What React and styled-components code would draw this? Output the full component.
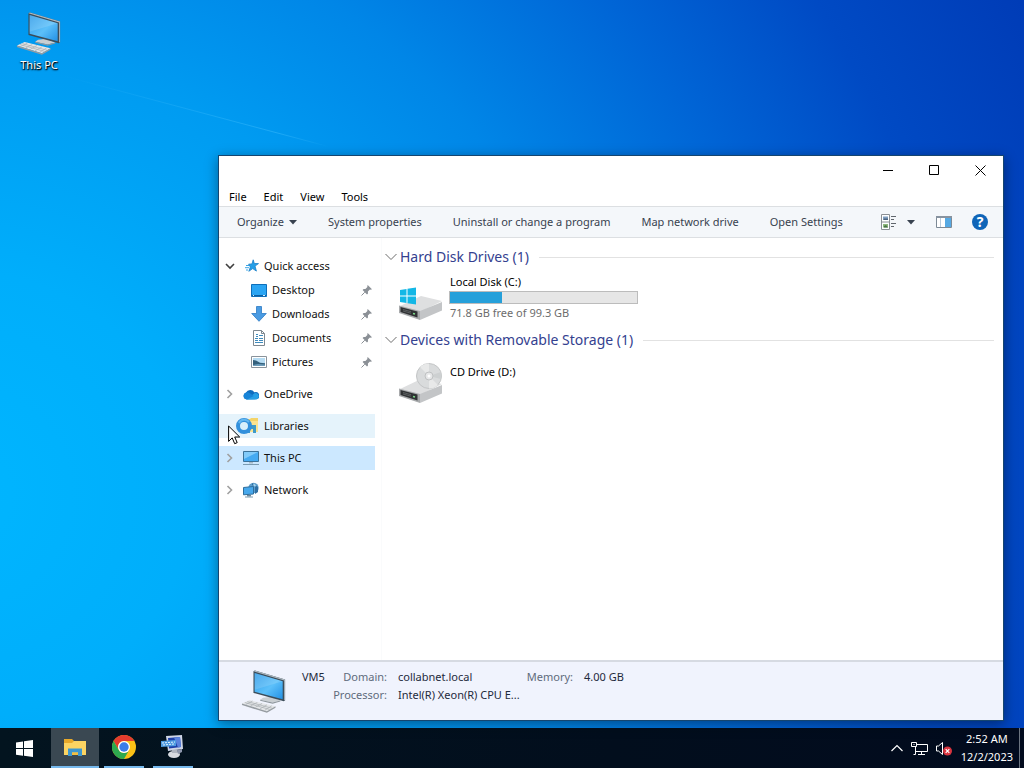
import { useState, useEffect } from "react";
import styled, { createGlobalStyle } from "styled-components";

const MENUS = ["File", "Edit", "View", "Tools"];

const COMMANDS = [
  "System properties",
  "Uninstall or change a program",
  "Map network drive",
  "Open Settings",
];

const PINNED = [
  { name: "Desktop", icon: <DesktopIcon /> },
  { name: "Downloads", icon: <DownloadsIcon /> },
  { name: "Documents", icon: <DocumentsIcon /> },
  { name: "Pictures", icon: <PicturesIcon /> },
];

const DRIVE = { name: "Local Disk (C:)", free: 71.8, total: 99.3 };

function App() {
  const [selected, setSelected] = useState("This PC");

  useEffect(() => {
    document.title = "This PC";
  }, []);

  return (
    <Screen>
      <GlobalStyle />
      <Desktop>
        <Streak viewBox="0 0 340 160" aria-hidden="true">
          <path d="M60 75 L330 147" stroke="url(#streak)" strokeWidth="1" />
          <defs>
            <linearGradient id="streak">
              <stop offset="0" stopColor="#4cc4ff" stopOpacity="0" />
              <stop offset="0.8" stopColor="#4cc4ff" stopOpacity="0.4" />
              <stop offset="1" stopColor="#4cc4ff" stopOpacity="0" />
            </linearGradient>
          </defs>
        </Streak>
        <Shortcut type="button">
          <ComputerIcon id="shortcut" size={46} />
          <span>This PC</span>
        </Shortcut>

        <Window>
          <TitleBar>
            <CaptionButton type="button" aria-label="Minimize">
              <svg width="11" height="11" viewBox="0 0 11 11">
                <path d="M0 5.5h10" stroke="#000" />
              </svg>
            </CaptionButton>
            <CaptionButton type="button" aria-label="Maximize">
              <svg width="11" height="11" viewBox="0 0 11 11">
                <path d="M.5 .5h9v9h-9z" stroke="#000" fill="none" />
              </svg>
            </CaptionButton>
            <CaptionButton type="button" aria-label="Close">
              <svg width="11" height="11" viewBox="0 0 11 11">
                <path d="M.5 .5l10 10M10.5 .5l-10 10" stroke="#000" />
              </svg>
            </CaptionButton>
          </TitleBar>

          <MenuBar>
            {MENUS.map(menu => (
              <MenuButton type="button" key={menu}>
                {menu}
              </MenuButton>
            ))}
          </MenuBar>

          <Toolbar>
            <Commands>
              <Command type="button">
                Organize
                <Caret />
              </Command>
              {COMMANDS.map(command => (
                <Command type="button" key={command}>
                  {command}
                </Command>
              ))}
            </Commands>
            <ToolButton type="button" aria-label="Change your view">
              <ViewIcon />
            </ToolButton>
            <ToolButton type="button" aria-label="More options" $gap={10}>
              <Caret />
            </ToolButton>
            <ToolButton type="button" aria-label="Preview pane" $gap={21}>
              <PaneIcon />
            </ToolButton>
            <ToolButton type="button" aria-label="Help" $gap={20}>
              <Help>?</Help>
            </ToolButton>
          </Toolbar>

          <Body>
            <Sidebar>
              <NavRow
                type="button"
                $active={selected === "Quick access"}
                onClick={() => setSelected("Quick access")}
              >
                <Chevron $open />
                <NavIcon>
                  <StarIcon />
                </NavIcon>
                Quick access
              </NavRow>
              <PinnedList>
                {PINNED.map(({ name, icon }) => (
                  <NavRow
                    type="button"
                    key={name}
                    $child
                    $active={selected === name}
                    onClick={() => setSelected(name)}
                  >
                    <NavIcon>{icon}</NavIcon>
                    <NavLabel>{name}</NavLabel>
                    <PinIcon />
                  </NavRow>
                ))}
              </PinnedList>
              <NavRow
                type="button"
                $active={selected === "OneDrive"}
                onClick={() => setSelected("OneDrive")}
              >
                <Chevron />
                <NavIcon>
                  <OneDriveIcon />
                </NavIcon>
                OneDrive
              </NavRow>
              <NavRow
                type="button"
                $hover
                $active={selected === "Libraries"}
                onClick={() => setSelected("Libraries")}
              >
                <ChevronSpace />
                <NavIcon>
                  <LibrariesIcon />
                </NavIcon>
                Libraries
              </NavRow>
              <NavRow
                type="button"
                $active={selected === "This PC"}
                onClick={() => setSelected("This PC")}
              >
                <Chevron />
                <NavIcon>
                  <MonitorIcon />
                </NavIcon>
                This PC
              </NavRow>
              <NavRow
                type="button"
                $active={selected === "Network"}
                onClick={() => setSelected("Network")}
              >
                <Chevron />
                <NavIcon>
                  <NetworkIcon />
                </NavIcon>
                Network
              </NavRow>
            </Sidebar>

            <Content>
              <Group title="Hard Disk Drives (1)">
                <Drive>
                  <DriveIcon />
                  <DriveInfo>
                    <span>{DRIVE.name}</span>
                    <Usage
                      role="progressbar"
                      aria-label="Used space"
                      aria-valuenow={Math.round(
                        (1 - DRIVE.free / DRIVE.total) * 100
                      )}
                    >
                      <UsageFill
                        style={{
                          width: `${(1 - DRIVE.free / DRIVE.total) * 100}%`,
                        }}
                      />
                    </Usage>
                    <Muted>
                      {DRIVE.free} GB free of {DRIVE.total} GB
                    </Muted>
                  </DriveInfo>
                </Drive>
              </Group>
              <Group title="Devices with Removable Storage (1)">
                <Drive $tall>
                  <CdIcon />
                  <DriveInfo>
                    <span>CD Drive (D:)</span>
                  </DriveInfo>
                </Drive>
              </Group>
            </Content>
          </Body>

          <Details>
            <ComputerIcon id="details" size={46} />
            <MachineName>VM5</MachineName>
            <Facts>
              <dt>Domain:</dt>
              <dd>collabnet.local</dd>
              <dt>Processor:</dt>
              <dd>Intel(R) Xeon(R) CPU E...</dd>
            </Facts>
            <Facts $narrow>
              <dt>Memory:</dt>
              <dd>4.00 GB</dd>
            </Facts>
          </Details>
        </Window>
      </Desktop>

      <Taskbar>
        <StartButton type="button" aria-label="Start">
          <svg width="17" height="17" viewBox="0 0 17 17" fill="#fff">
            <path d="M0 2.4l7-1v6.7H0zM8 1.3L17 0v8.1H8zM0 9h7v6.7l-7-1zM8 9h9v8l-9-1.3z" />
          </svg>
        </StartButton>
        <TaskButton type="button" aria-label="File Explorer" $active>
          <FolderIcon />
        </TaskButton>
        <TaskButton type="button" aria-label="Google Chrome">
          <ChromeIcon />
        </TaskButton>
        <TaskButton type="button" aria-label="Remote desktop">
          <RemoteIcon />
        </TaskButton>
        <Tray>
          <TrayButton type="button" aria-label="Show hidden icons">
            <svg width="12" height="8" viewBox="0 0 12 8" fill="none">
              <path d="M.5 7L6 1.5 11.5 7" stroke="#fff" strokeWidth="1.2" />
            </svg>
          </TrayButton>
          <TrayButton type="button" aria-label="Network">
            <svg width="17" height="15" viewBox="0 0 17 15" fill="none" stroke="#fff">
              <path d="M5.5 3.5h11v7h-12M4.5 6v7.5M2.5 13.5h2M10.5 10.5v3M7 13.5h7" />
              <path d="M.5 1.5h5v4h-5zM2.5 3.5h1" />
            </svg>
          </TrayButton>
          <TrayButton type="button" aria-label="Volume muted">
            <svg width="17" height="15" viewBox="0 0 17 15">
              <path
                d="M.5 5v5h2l4 3.5v-12L2.5 5z"
                fill="none"
                stroke="#fff"
              />
              <circle cx="11.5" cy="10" r="4.5" fill="#d9343f" />
              <path
                d="M9.7 8.2l3.6 3.6M13.3 8.2l-3.6 3.6"
                stroke="#fff"
                strokeWidth="1.2"
              />
            </svg>
          </TrayButton>
          <Clock>
            <span>2:52 AM</span>
            <span>12/2/2023</span>
          </Clock>
          <ShowDesktop type="button" aria-label="Show desktop" />
        </Tray>
      </Taskbar>

      <Cursor width="13" height="20" viewBox="0 0 13 20" aria-hidden="true">
        <path
          d="M.6 1v15.4l3.6-3.5 2.5 5.8 2.5-1.1-2.5-5.6h5z"
          fill="#fff"
          stroke="#000"
        />
      </Cursor>
    </Screen>
  );
}

function Group({ title, children }) {
  return (
    <section>
      <GroupHeader>
        <svg width="12" height="8" viewBox="0 0 12 8" fill="none">
          <path d="M.5 1L6 6.5 11.5 1" stroke="#6c6c6c" />
        </svg>
        <h2>{title}</h2>
        <Rule />
      </GroupHeader>
      {children}
    </section>
  );
}

function Caret() {
  return (
    <svg width="8" height="5" viewBox="0 0 8 5" fill="#38424f">
      <path d="M0 0h8L4 4.6z" />
    </svg>
  );
}

function Chevron({ $open }) {
  return (
    <ChevronBox>
      {$open ? (
        <svg width="10" height="7" viewBox="0 0 10 7" fill="none">
          <path d="M1 1l4 4 4-4" stroke="#404040" strokeWidth="1.6" />
        </svg>
      ) : (
        <svg width="7" height="10" viewBox="0 0 7 10" fill="none">
          <path d="M1.5 1l4 4-4 4" stroke="#a0a0a0" strokeWidth="1.6" />
        </svg>
      )}
    </ChevronBox>
  );
}

function ComputerIcon({ id, size }) {
  return (
    <svg width={size} height={size} viewBox="0 0 48 48">
      <defs>
        <linearGradient id={id} x1="0" y1="0" x2="1" y2="1">
          <stop offset="0" stopColor="#2f9be8" />
          <stop offset="0.55" stopColor="#5cc0fa" />
          <stop offset="1" stopColor="#2390e4" />
        </linearGradient>
      </defs>
      <path d="M20 33l13 3 8-2-9-4-9 1z" fill="#c9ced2" />
      <path d="M20 33l13 3v1.3l-13-3zM33 36l8-2v1l-8 2.3z" fill="#8f979d" />
      <path d="M13 3.5l1.5-1L46 12v22l-1.3.8L13 26z" fill="#3c4c59" />
      <path d="M14.5 2.5L46 12v22l-1-.3V13L13 3.5z" fill="#aeb9c0" />
      <path d="M14.2 5.2l29.3 8.6v18.8l-29.3-7.9z" fill={`url(#${id})`} />
      <path d="M14.2 5.2l29.3 8.6-29.3 9z" fill="#fff" opacity=".14" />
      <path d="M9 33.5L36 40l-9 5L1 37z" fill="#e4e6e8" />
      <path d="M1 37l26 8v1.8L1 38.5zM27 45l9-5v1.5l-9 5.3z" fill="#969ca1" />
      <path
        d="M6.5 35l26 7M4 36l26 7.3M12 34.5l-7 3.5M17 36l-7 3.5M22 37l-7 4M27 38.5l-7 4M32 39.5l-7 4.5"
        stroke="#adb2b6"
        strokeWidth=".8"
      />
    </svg>
  );
}

function ViewIcon() {
  return (
    <svg width="16" height="16" viewBox="0 0 16 16">
      <path d="M.5 .5h8v15h-8zM.5 8h8" fill="#fff" stroke="#8a8f94" />
      <path d="M2 2.5h5v3H2z" fill="#7f9fc0" />
      <path d="M3 4.5h4v1.5H2z" fill="#4c6480" />
      <path d="M2 10h5v3.5H2z" fill="#8fb87c" />
      <path d="M3 12l2-1 2 2.5H3z" fill="#4a7248" />
      <path d="M10 2.5h5M10 5.5h3M10 9.5h5M10 12.5h3" stroke="#60666d" />
    </svg>
  );
}

function PaneIcon() {
  return (
    <svg width="16" height="12" viewBox="0 0 16 12">
      <path d="M.5 .5h15v11H.5z" fill="#fff" stroke="#7d8a96" />
      <path d="M0 0h16v2H0z" fill="#8793a0" />
      <path d="M4.5 2v9" stroke="#b9cbdc" />
      <path d="M9 2h6v9H9z" fill="#56a9e3" />
    </svg>
  );
}

function StarIcon() {
  return (
    <svg width="14" height="14" viewBox="0 0 14 14">
      <path
        d="M8.2 .8l1.1 3.7 4.2.1-3.5 2.5 1.4 5-3.7-2.5-3.9 2.7 1.6-4.3-1.8-2.8 3.4-.3z"
        fill="#249fe8"
        stroke="#167fc9"
        strokeWidth=".8"
      />
      <path d="M1 6.5h3M0 8.7h4M1 11h2" stroke="#3aa5e6" strokeWidth="1" />
    </svg>
  );
}

function DesktopIcon() {
  return (
    <svg width="16" height="13" viewBox="0 0 16 13">
      <path d="M.5 .5h15v12H.5z" fill="#2ba5f3" stroke="#0e6fba" />
      <path d="M1 11h14v1H1z" fill="#0c5ea0" />
      <path d="M2 11.5h1M12 11.5h2" stroke="#d6efff" />
    </svg>
  );
}

function DownloadsIcon() {
  return (
    <svg width="16" height="16" viewBox="0 0 16 16">
      <path
        d="M5.5 .5h5v7h4.8L8 15.3.7 7.5h4.8z"
        fill="#4a9be2"
        stroke="#2c7ac4"
        strokeWidth=".8"
      />
    </svg>
  );
}

function DocumentsIcon() {
  return (
    <svg width="16" height="16" viewBox="0 0 16 16">
      <path d="M2.5 .5h8l3 3v12h-11z" fill="#fff" stroke="#7e8890" />
      <path d="M10.5 .5v3h3" fill="none" stroke="#7e8890" />
      <path
        d="M5 4.5h2M8 5.5h4M5 6.5h2M4 8.5h3M8 8.5h4M4 10.5h3M8 10.5h4M4 12.5h8"
        stroke="#3f8bbd"
      />
    </svg>
  );
}

function PicturesIcon() {
  return (
    <svg width="16" height="12" viewBox="0 0 16 12">
      <path d="M.5 .5h15v11H.5z" fill="#fff" stroke="#8a939b" />
      <path d="M2 2h12v8H2z" fill="#b6dcf3" />
      <path d="M2 4l3 .5 4 2.3 5 .5V10H2z" fill="#34607c" />
      <path d="M2 9l5-1 7 .5V10H2z" fill="#6c9cba" />
    </svg>
  );
}

function PinIcon() {
  return (
    <svg width="11" height="11" viewBox="0 0 11 11">
      <path
        d="M6.7 0L11 4.3l-1.2.4-.9-.1-2 2 .1 1.8-1 1L1.6 5l1-1 1.8.1 2-2-.1-1z"
        fill="#8b9096"
      />
      <path d="M3.8 7.2L.5 10.5" stroke="#8b9096" />
    </svg>
  );
}

function OneDriveIcon() {
  return (
    <svg width="16" height="11" viewBox="0 0 17 11">
      <path
        d="M4 10.8A3.8 3.8 0 013.2 3.4 5 5 0 0112 3.2a3.8 3.8 0 013 7.2z"
        fill="#0f6cbe"
      />
      <path
        d="M4 10.8l8.2-6.6a3.5 3.5 0 014.6 3.8 3 3 0 01-2.8 2.8z"
        fill="#279fe5"
      />
      <path d="M3.8 3.3a4.2 4.2 0 013.6 1l4 2.7-7.3 3.8A3.8 3.8 0 013.8 3.3z" fill="#1784d8" />
    </svg>
  );
}

// The folder is partly covered by the busy ring that trails the pointer
function LibrariesIcon() {
  return (
    <svg width="24" height="18" viewBox="0 0 24 18">
      <path d="M10 2h5l1-1h7v14H10z" fill="#f4d469" />
      <path d="M13 4h10v11H13z" fill="#fbe391" />
      <path d="M12 8h9v8h-3v-4h-3v4h-3z" fill="#3e9ac9" />
      <circle cx="9" cy="9" r="6" fill="#d9effb" stroke="#3390dc" strokeWidth="4" />
      <path d="M4 6a6 6 0 0110-1" fill="none" stroke="#63b7f0" strokeWidth="2" />
    </svg>
  );
}

function MonitorIcon() {
  return (
    <svg width="16" height="16" viewBox="0 0 16 16">
      <path d="M.5 1.5h15v10H.5z" fill="#45aaf2" stroke="#3c7299" />
      <path d="M1 2h14L1 9z" fill="#82cbfa" />
      <path d="M6 12h4v1.5H6z" fill="#a9bac6" />
      <path d="M0 14.5h16" stroke="#7b9bb0" />
    </svg>
  );
}

function NetworkIcon() {
  return (
    <svg width="16" height="16" viewBox="0 0 16 16">
      <circle cx="10.5" cy="6" r="5.2" fill="#5c9dcb" />
      <path d="M9 1l6 4v5l-3 2V5L9 3z" fill="#2f6fa3" />
      <path d="M11 1.5l2 2-1 1.5-2-2z" fill="#a7d8f2" />
      <path d="M.5 5.5l10-1v7.5l-10 .8z" fill="#47a8ec" stroke="#2e6e9d" />
      <path d="M4 13h4v1.5H4z" fill="#6e8797" />
      <path d="M2 15h8" stroke="#7b9bb0" />
    </svg>
  );
}

function DriveBase({ y }) {
  return (
    <g transform={`translate(0 ${y})`}>
      <path d="M1 10L22 0l21 5-22 11z" fill="#dedfe0" />
      <path d="M0 9.5L21 15v9L0 17z" fill="#a8aaac" />
      <path d="M21 15l22-9v8.5L21 24z" fill="#c3c5c7" />
      <path d="M1.5 11l17 4.5v6L1.5 16z" fill="#303234" />
      <path d="M4 13.5l8 2.2M4 15l8 2.2" stroke="#66696b" strokeWidth=".8" />
      <path d="M14 17.5l2 .5" stroke="#7fdc8c" strokeWidth="1.5" />
    </g>
  );
}

function DriveIcon() {
  return (
    <svg width="43" height="34" viewBox="0 0 43 34">
      <DriveBase y={9} />
      <path
        d="M1 3l6.5-1v6.5H1zM8.5 1.8L17 .5v8H8.5zM1 9.5h6.5V16L1 15zM8.5 9.5H17v8l-8.5-1.3z"
        fill="#13b7e6"
      />
    </svg>
  );
}

function CdIcon() {
  return (
    <svg width="43" height="41" viewBox="0 0 43 41">
      <DriveBase y={16} />
      <circle cx="30" cy="13" r="12.5" fill="#d9dbdc" stroke="#c3c5c6" />
      <path d="M30 13L21 4a12.5 12.5 0 019-3.5zM30 13l9 9a12.5 12.5 0 01-9 3.5z" fill="#e8e9e9" />
      <path d="M30 13l12-4a12 12 0 010 7z" fill="#cdd0d1" />
      <circle cx="30" cy="13" r="4" fill="#e6e7e8" stroke="#bfc1c2" />
      <circle cx="30" cy="13" r="1.5" fill="#fff" />
    </svg>
  );
}

function FolderIcon() {
  return (
    <svg width="22" height="18" viewBox="0 0 22 18">
      <path d="M0 1h8l2 2h11v14H0z" fill="#e8a92a" />
      <path d="M0 5h8l2-2h12v14H0z" fill="#fcd462" />
      <path d="M4 10.5h14V18h-4v-3.5H8V18H4z" fill="#3e97cf" />
      <path d="M8 14.5h6V17H8z" fill="#f5bf3f" />
    </svg>
  );
}

function ChromeIcon() {
  return (
    <svg width="24" height="24" viewBox="0 0 24 24">
      <circle cx="12" cy="12" r="12" fill="#fbc116" />
      <path d="M1.6 6A12 12 0 0122.4 6H12a6 6 0 00-5.2 9z" fill="#e33b2e" />
      <path d="M1.6 6A12 12 0 0012 24l5.2-9A6 6 0 016.8 15z" fill="#2da94f" />
      <circle cx="12" cy="12" r="6" fill="#fff" />
      <circle cx="12" cy="12" r="4.7" fill="#3b7de8" />
    </svg>
  );
}

function RemoteIcon() {
  return (
    <svg width="24" height="24" viewBox="0 0 24 24">
      <path d="M5 1l16-1 1 14-15 2z" fill="#cfd6e6" />
      <path d="M7 3l12-1 1 10-12 1.5z" fill="#1d3fa8" />
      <path d="M13 2.5L19 2l1 10-3 .5z" fill="#5b83dd" />
      <path d="M0 6l15-1v6L0 12z" fill="#4d9be0" />
      <path d="M1 8l13-1M2 10l11-1" stroke="#dff0ff" strokeDasharray="2 1" />
      <ellipse cx="13" cy="19.5" rx="6" ry="3.5" fill="#d9dce2" />
      <path d="M11 15l5-1 1 4h-6z" fill="#b1b7c2" />
      <path d="M16 15l5-1v3l-4 2z" fill="#8e97ad" />
    </svg>
  );
}

const GlobalStyle = createGlobalStyle`
  * {
    box-sizing: border-box;
  }
  body {
    margin: 0;
    font-family: "Noto Sans", "Open Sans", sans-serif;
    font-size: 11px;
    line-height: 18px;
    color: #111;
  }
  button {
    padding: 0;
    border: 0;
    background: none;
    font: inherit;
    color: inherit;
    white-space: nowrap;
  }
  svg {
    display: block;
    flex: none;
  }
`;

const Screen = styled.div`
  position: relative;
  display: flex;
  flex-direction: column;
  height: 100vh;
  overflow: hidden;
`;

const Desktop = styled.main`
  position: relative;
  flex: 1;
  padding: 10px 2px;
  background: radial-gradient(
    ellipse 118% 155% at -5% 68%,
    #00b6ff 0%,
    #00aefb 20%,
    #009bf1 40%,
    #0086e7 54%,
    #0065d6 70%,
    #004ac4 84%,
    #003bb6 100%
  );
`;

const Streak = styled.svg`
  position: absolute;
  left: 0;
  top: 0;
  width: 340px;
`;

const Shortcut = styled.button`
  position: relative;
  display: flex;
  flex-direction: column;
  align-items: center;
  width: 74px;
  color: #fff;
  text-shadow: 0 1px 2px #000, 1px 1px 1px #000;
`;

const Window = styled.section`
  position: absolute;
  inset: 155px 20px 7px 218px;
  display: flex;
  flex-direction: column;
  border: 1px solid #15456f;
  background: #fff;
  box-shadow: 0 3px 12px rgba(0, 0, 0, 0.4);
`;

const TitleBar = styled.header`
  display: flex;
  justify-content: flex-end;
  height: 29px;
`;

const CaptionButton = styled.button`
  display: flex;
  align-items: center;
  justify-content: center;
  width: 46px;
`;

const MenuBar = styled.nav`
  display: flex;
  gap: 17px;
  height: 21px;
  padding: 3px 0 0 10px;
`;

const MenuButton = styled.button`
  color: #000;
`;

const Toolbar = styled.div`
  display: flex;
  align-items: center;
  height: 32px;
  padding: 0 15px 0 18px;
  border-top: 1px solid #dcdfe2;
  border-bottom: 1px solid #dcdfe2;
  background: #f4f7fa;
  color: #38424f;
`;

const Commands = styled.div`
  display: flex;
  flex: 1;
  gap: 31px;
`;

const Command = styled.button`
  display: flex;
  align-items: center;
  gap: 5px;
`;

const ToolButton = styled.button`
  margin-left: ${({ $gap }) => $gap || 0}px;
`;

const Help = styled.span`
  display: block;
  width: 16px;
  height: 16px;
  border-radius: 50%;
  background: #0f65b8;
  color: #fff;
  font-size: 14px;
  font-weight: 700;
  line-height: 16px;
`;

const Body = styled.div`
  display: flex;
  flex: 1;
  min-height: 0;
`;

const Sidebar = styled.nav`
  display: flex;
  flex-direction: column;
  gap: 8px;
  width: 163px;
  padding: 16px 6px 0 0;
  border-right: 1px solid #fafbfc;
`;

const PinnedList = styled.div`
  display: flex;
  flex-direction: column;
  margin-top: -8px;
`;

const NavRow = styled.button`
  display: flex;
  align-items: center;
  height: 24px;
  padding: ${({ $child }) => ($child ? "0 3px 0 32px" : "0 0 0 5px")};
  background: ${({ $active, $hover }) =>
    $active ? "#cce8ff" : $hover ? "#e5f3fb" : "transparent"};
`;

const NavLabel = styled.span`
  flex: 1;
  text-align: left;
`;

const NavIcon = styled.span`
  display: flex;
  align-items: center;
  justify-content: flex-end;
  width: 21px;
  padding-right: 5px;
`;

const ChevronBox = styled.span`
  display: flex;
  justify-content: center;
  width: 11px;
  margin-right: 8px;
`;

const ChevronSpace = styled.span`
  width: 19px;
`;

const Content = styled.div`
  flex: 1;
  padding: 7px 9px 0 3px;
`;

const GroupHeader = styled.header`
  display: flex;
  align-items: center;
  gap: 3px;
  height: 24px;

  & h2 {
    margin: 0;
    color: #34418f;
    font-size: 14px;
    font-weight: 400;
  }
`;

const Rule = styled.span`
  flex: 1;
  height: 1px;
  margin-left: 7px;
  background: #e2e2e2;
`;

const Drive = styled.article`
  display: flex;
  gap: 7px;
  height: 59px;
  padding: ${({ $tall }) => ($tall ? "11px 0 0 14px" : "4px 0 0 14px")};

  & > svg {
    margin-top: ${({ $tall }) => ($tall ? "0" : "14px")};
  }
`;

const DriveInfo = styled.div`
  display: flex;
  flex-direction: column;
  width: 189px;
  color: #000;

  & > span {
    padding-left: 1px;
  }
`;

const Usage = styled.div`
  height: 13px;
  border: 1px solid #bcbcbc;
  background: #e6e6e6;
`;

const UsageFill = styled.div`
  height: 100%;
  background: #26a0da;
`;

const Muted = styled.span`
  color: #6d6d6d;
`;

const Details = styled.footer`
  display: flex;
  height: 60px;
  padding: 6px 0 0 22px;
  border-top: 2px solid #d6dae2;
  background: #f0f3fd;
  color: #1e2a3c;
`;

const MachineName = styled.span`
  width: 29px;
  margin-left: 15px;
`;

const Facts = styled.dl`
  display: grid;
  grid-template-columns: ${({ $narrow }) => ($narrow ? "48px" : "56px")} minmax(
      127px,
      auto
    );
  align-content: start;
  column-gap: 11px;
  margin: 0;

  & dt {
    color: #5f6b7c;
    text-align: right;
  }
  & dd {
    margin: 0;
  }
`;

const Taskbar = styled.footer`
  display: flex;
  height: 40px;
  background: linear-gradient(90deg, #03141f, #020e1d 60%, #020b1e);
  color: #fff;
`;

const StartButton = styled.button`
  display: flex;
  align-items: center;
  justify-content: center;
  width: 48px;
  margin-right: 3px;
`;

const TaskButton = styled.button`
  display: flex;
  align-items: center;
  justify-content: center;
  width: ${({ $active }) => ($active ? 48 : 40)}px;
  margin-right: ${({ $active }) => ($active ? 5 : 9)}px;
  border-bottom: 2px solid #76b9ed;
  background: ${({ $active }) => ($active ? "#3a4852" : "none")};
`;

const Tray = styled.div`
  display: flex;
  align-items: center;
  gap: 8px;
  margin-left: auto;
`;

const TrayButton = styled.button`
  display: block;
`;

const Clock = styled.time`
  display: flex;
  flex-direction: column;
  align-items: center;
`;

const ShowDesktop = styled.button`
  align-self: stretch;
  width: 5px;
  margin-left: -2px;
  border-left: 1px solid #6b7480;
`;

const Cursor = styled.svg`
  position: absolute;
  left: 228px;
  top: 425px;
  pointer-events: none;
`;

export default App;
